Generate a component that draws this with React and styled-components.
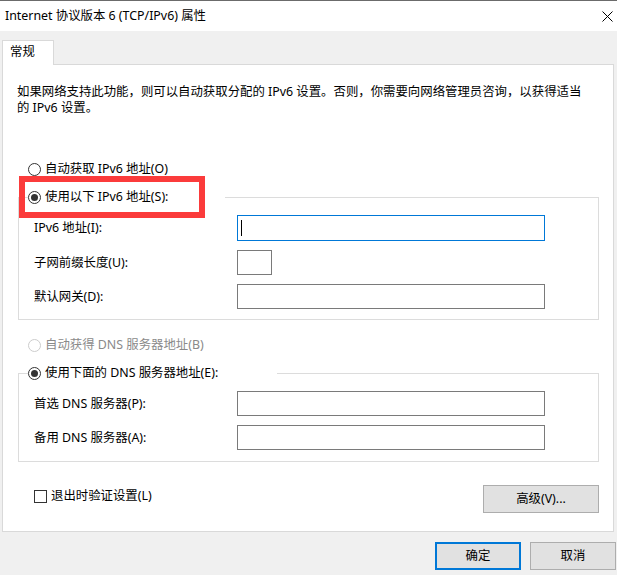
import React from "react";
import styled, { createGlobalStyle } from "styled-components";

const Global = createGlobalStyle`
  html, body { margin: 0; padding: 0; background: #f0f0f0; }
  body {
    font-family: "Noto Sans", "Noto Sans CJK SC", sans-serif;
    font-size: 12.4px;
    color: #000;
  }
  * { box-sizing: border-box; }
`;

const Window = styled.div`
  width: 617px;
  height: 575px;
  background: #f0f0f0;
  display: flex;
  flex-direction: column;
  overflow: hidden;
`;

const TitleBar = styled.div`
  height: 31px;
  border-top: 1px solid #6b6b6b;
  background: #fff;
  display: flex;
  align-items: center;
  justify-content: space-between;
  padding: 0 4px 0 5px;
  line-height: 16px;
`;

const Body = styled.div`
  display: flex;
  flex-direction: column;
  padding-top: 9px;
`;

const TabStrip = styled.div`
  display: flex;
  padding-left: 2px;
`;

const Tab = styled.div`
  position: relative;
  z-index: 1;
  width: 52px;
  height: 25px;
  margin-bottom: -1px;
  background: #fff;
  border: 1px solid #d9d9d9;
  border-bottom: none;
  padding: 3px 0 0 7px;
  line-height: 16px;
`;

const Panel = styled.div`
  position: relative;
  margin: 0 3px 0 2px;
  height: 468px;
  background: #fff;
  border: 1px solid #d9d9d9;
  padding: 19px 14px 0 14px;
  display: flex;
  flex-direction: column;
`;

const Description = styled.p`
  margin: 0;
  line-height: 16px;
`;

const OptionRow = styled.div`
  display: flex;
  align-items: center;
  gap: 4px;
  height: 16px;
  line-height: 16px;
  margin: ${(p) => p.$mt}px 0 0 11px;
  color: ${(p) => (p.$disabled ? "#8a8a8a" : "#000")};
`;

const Group = styled.fieldset`
  margin: ${(p) => p.$mt}px 0 0 1px;
  padding: 10px 0 ${(p) => p.$pb}px 0;
  border: 1px solid #dcdcdc;
  min-width: 0;
`;

const Legend = styled.legend`
  margin-left: 9px;
  padding: 0;
  width: ${(p) => p.$w}px;
  height: 16px;
  display: flex;
  align-items: center;
  gap: 4px;
  line-height: 16px;
`;

const FieldGrid = styled.div`
  display: grid;
  grid-template-columns: 203px auto;
  row-gap: 9px;
  align-items: center;
  padding-left: 15px;
  line-height: 16px;
`;

const TextBox = styled.div`
  width: ${(p) => p.$w}px;
  height: ${(p) => p.$h || 25}px;
  border: 1px solid ${(p) => (p.$focus ? "#0078d7" : "#7a7a7a")};
  background: #fff;
  display: flex;
  align-items: center;
  padding-left: 3px;
`;

const Caret = styled.span`
  width: 1px;
  height: 16px;
  background: #000;
`;

const Highlight = styled.div`
  position: absolute;
  left: 16px;
  top: 111px;
  width: 186px;
  height: 42px;
  border: 6px solid #fb3b3b;
  pointer-events: none;
`;

const BottomRow = styled.div`
  display: flex;
  justify-content: space-between;
  align-items: flex-start;
  margin-top: 23px;
  padding-left: 17px;
`;

const CheckLabel = styled.label`
  display: flex;
  align-items: center;
  gap: 4px;
  margin-top: 3px;
  line-height: 16px;
`;

const CheckBox = styled.span`
  width: 13px;
  height: 13px;
  border: 1px solid #333;
  background: #fff;
`;

const Button = styled.div`
  width: ${(p) => p.$w}px;
  height: 28px;
  background: #e1e1e1;
  border: ${(p) => (p.$default ? "2px solid #0078d7" : "1px solid #adadad")};
  display: flex;
  align-items: center;
  justify-content: center;
  line-height: 16px;
`;

const ButtonRow = styled.div`
  display: flex;
  justify-content: flex-end;
  gap: 9px;
  margin-top: 10px;
  padding-right: 1px;
`;

const Radio = ({ checked, disabled }) => (
  <svg width="13" height="13" viewBox="0 0 13 13">
    <circle
      cx="6.5"
      cy="6.5"
      r="6"
      fill="#fff"
      stroke={disabled ? "#cccccc" : "#333"}
      strokeWidth="1"
    />
    {checked && <circle cx="6.5" cy="6.5" r="3.5" fill="#333" />}
  </svg>
);

const CloseIcon = () => (
  <svg width="11" height="11" viewBox="0 0 11 11">
    <path d="M0.5 0.5 L10.5 10.5 M10.5 0.5 L0.5 10.5" stroke="#000" strokeWidth="1" />
  </svg>
);

export default function App() {
  return (
    <>
      <Global />
      <Window>
        <TitleBar>
          <span>Internet 协议版本 6 (TCP/IPv6) 属性</span>
          <CloseIcon />
        </TitleBar>
        <Body>
          <TabStrip>
            <Tab>常规</Tab>
          </TabStrip>
          <Panel>
            <Description>
              如果网络支持此功能，则可以自动获取分配的 IPv6 设置。否则，你需要向网络管理员咨询，以获得适当
              <br />
              的 IPv6 设置。
            </Description>

            <OptionRow $mt={45}>
              <Radio />
              <span>自动获取 IPv6 地址(O)</span>
            </OptionRow>

            <Group $mt={12} $pb={10}>
              <Legend $w={197}>
                <Radio checked />
                <span>使用以下 IPv6 地址(S):</span>
              </Legend>
              <FieldGrid>
                <span>IPv6 地址(I):</span>
                <TextBox $w={308} $h={26} $focus>
                  <Caret />
                </TextBox>
                <span>子网前缀长度(U):</span>
                <TextBox $w={35} />
                <span>默认网关(D):</span>
                <TextBox $w={308} />
              </FieldGrid>
            </Group>

            <OptionRow $mt={17} $disabled>
              <Radio disabled />
              <span>自动获得 DNS 服务器地址(B)</span>
            </OptionRow>

            <Group $mt={12} $pb={11}>
              <Legend $w={249}>
                <Radio checked />
                <span>使用下面的 DNS 服务器地址(E):</span>
              </Legend>
              <FieldGrid>
                <span>首选 DNS 服务器(P):</span>
                <TextBox $w={308} />
                <span>备用 DNS 服务器(A):</span>
                <TextBox $w={308} />
              </FieldGrid>
            </Group>

            <BottomRow>
              <CheckLabel>
                <CheckBox />
                <span>退出时验证设置(L)</span>
              </CheckLabel>
              <Button $w={116}>高级(V)...</Button>
            </BottomRow>

            <Highlight />
          </Panel>
          <ButtonRow>
            <Button $w={86} $default>
              确定
            </Button>
            <Button $w={86}>取消</Button>
          </ButtonRow>
        </Body>
      </Window>
    </>
  );
}
